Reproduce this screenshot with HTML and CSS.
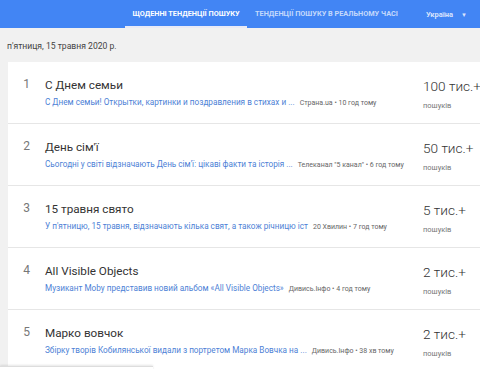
FILE: index.html
```html
<!DOCTYPE html>
<html>
	<head>
		<title>Тенденції пошуку</title>
		<link rel="stylesheet" href="styles.css">
	</head>
	<body>
		<div id="header">
			<div class="tabs">
				<a class="tab active">Щоденні тенденції пошуку</a>
				<a class="tab">Тенденції пошуку в реальному часі</a>
			</div>
			<div class="geo">Україна <span class="caret">&#9660;</span></div>
		</div>
		<p class="date">п'ятниця, 15 травня 2020 р.</p>
		<div id="feed">
			<div class="item">
				<div class="num">1</div>
				<div class="main">
					<div class="title">С Днем семьи</div>
					<div class="snippet"><span class="link">С Днем семьи! Открытки, картинки и поздравления в стихах и ...</span><span class="src">Страна.ua • 10 год тому</span></div>
				</div>
				<div class="count">
					<div class="value">100 тис.+</div>
					<div class="label">пошуків</div>
				</div>
			</div>
			<div class="item">
				<div class="num">2</div>
				<div class="main">
					<div class="title">День сім'ї</div>
					<div class="snippet"><span class="link">Сьогодні у світі відзначають День сім'ї: цікаві факти та історія ...</span><span class="src">Телеканал "5 канал" • 6 год тому</span></div>
				</div>
				<div class="count">
					<div class="value">50 тис.+</div>
					<div class="label">пошуків</div>
				</div>
			</div>
			<div class="item">
				<div class="num">3</div>
				<div class="main">
					<div class="title">15 травня свято</div>
					<div class="snippet"><span class="link">У п'ятницю, 15 травня, відзначають кілька свят, а також річницю іст</span><span class="src">20 Хвилин • 7 год тому</span></div>
				</div>
				<div class="count">
					<div class="value">5 тис.+</div>
					<div class="label">пошуків</div>
				</div>
			</div>
			<div class="item">
				<div class="num">4</div>
				<div class="main">
					<div class="title">All Visible Objects</div>
					<div class="snippet"><span class="link">Музикант Moby представив новий альбом «All Visible Objects»</span><span class="src">Дивись.Інфо • 4 год тому</span></div>
				</div>
				<div class="count">
					<div class="value">2 тис.+</div>
					<div class="label">пошуків</div>
				</div>
			</div>
			<div class="item">
				<div class="num">5</div>
				<div class="main">
					<div class="title">Марко вовчок</div>
					<div class="snippet"><span class="link">Збірку творів Кобилянської видали з портретом Марка Вовчка на ...</span><span class="src">Дивись.Інфо • 38 хв тому</span></div>
				</div>
				<div class="count">
					<div class="value">2 тис.+</div>
					<div class="label">пошуків</div>
				</div>
			</div>
		</div>
		<div class="peek"></div>
	</body>
</html>
```

FILE: styles.css
```css
body {
	margin: 0;
	background: #f1f1f1;
	font-family: Roboto, "Noto Sans", sans-serif;
	color: #333;
	overflow: hidden;
	height: 369px;
}

#header {
	display: flex;
	align-items: stretch;
	height: 28px;
	background: #4285f4;
	padding-left: 125px;
}

.tabs {
	display: flex;
}

.tab {
	display: flex;
	align-items: center;
	padding: 1px 8px 0 8px;
	font-size: 7.3px;
	font-weight: 700;
	text-transform: uppercase;
	white-space: nowrap;
	color: rgba(255, 255, 255, 0.7);
	box-sizing: border-box;
	border-bottom: 2px solid transparent;
}

.tab.active {
	color: #fff;
	border-bottom-color: #e8eaf6;
	width: 122px;
	justify-content: center;
}

.geo {
	display: flex;
	align-items: center;
	margin-left: 20px;
	font-size: 7.5px;
	font-weight: 700;
	white-space: nowrap;
	color: rgba(255, 255, 255, 0.8);
}

.caret {
	font-size: 6px;
	margin-left: 8px;
}

.date {
	margin: 0;
	padding: 13px 7px 0;
	height: 21px;
	font-size: 8.6px;
	color: #444;
}

#feed {
	margin: 0 0 0 8px;
	background: #e6e6e6;
	display: flex;
	flex-direction: column;
	gap: 1px;
}

.item {
	display: flex;
	height: 61px;
	background: #fff;
	align-items: center;
}

.num {
	width: 37px;
	text-align: center;
	font-size: 12px;
	color: #777;
	margin-top: -17px;
}

.main {
	flex: 1;
	min-width: 0;
}

.title {
	font-size: 11.7px;
	color: #333;
	margin-bottom: 5px;
}

.snippet {
	font-size: 8.2px;
	white-space: nowrap;
	overflow: hidden;
}

.link {
	color: #4d7fd6;
	margin-right: 5px;
}

.src {
	color: #666;
	font-size: 7px;
}

.count {
	width: 57px;
	flex: none;
	margin-left: 12px;
	margin-top: 3px;
}

.value {
	font-size: 13.6px;
	font-weight: 300;
	color: #333;
	margin-bottom: 7px;
	white-space: nowrap;
}

.label {
	font-size: 7.5px;
	color: #777;
}

.peek {
	position: absolute;
	left: 0;
	top: 366px;
	width: 153px;
	height: 10px;
	background: #fff;
	border-top: 1px solid #ddd;
	box-shadow: 0 -1px 2px rgba(0, 0, 0, 0.1);
}
```
